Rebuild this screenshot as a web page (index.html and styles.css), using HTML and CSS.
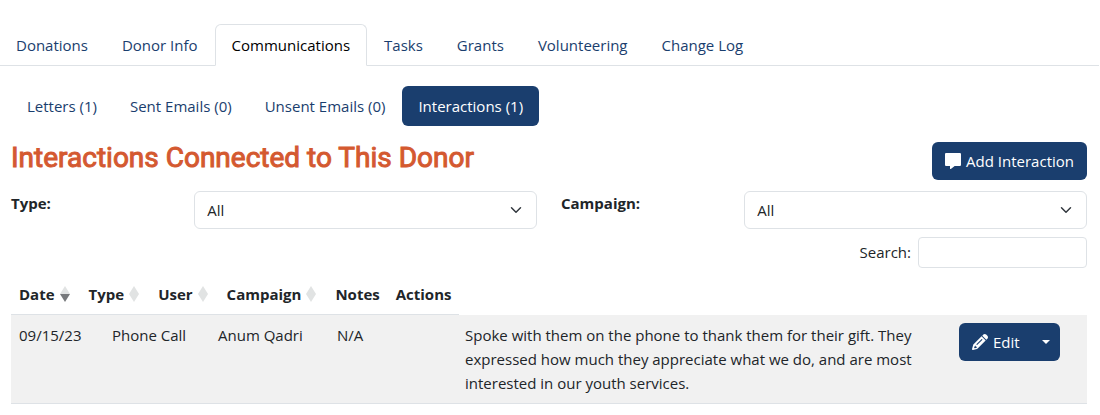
FILE: index.html
```
<!DOCTYPE html>
<html lang="en">
<head>
    <meta charset="UTF-8">
    <meta name="viewport" content="width=device-width, initial-scale=1.0">
    <title>Donor Communications</title>
    <link rel="stylesheet" href="styles.css">
</head>
<body>
    <nav class="tabs">
        <a class="tab" href="#">Donations</a>
        <a class="tab" href="#">Donor Info</a>
        <a class="tab active" href="#">Communications</a>
        <a class="tab" href="#">Tasks</a>
        <a class="tab" href="#">Grants</a>
        <a class="tab" href="#">Volunteering</a>
        <a class="tab" href="#">Change Log</a>
    </nav>
    <main class="content">
        <nav class="pills">
            <a class="pill" href="#">Letters (1)</a>
            <a class="pill" href="#">Sent Emails (0)</a>
            <a class="pill" href="#">Unsent Emails (0)</a>
            <a class="pill active" href="#">Interactions (1)</a>
        </nav>
        <div class="heading">
            <h3>Interactions Connected to This Donor</h3>
            <button class="btn" type="button">
                <svg class="icon" viewBox="0 0 512 512" aria-hidden="true"><path d="M40 0C18 0 0 18 0 40V376c0 22 18 40 40 40h120v80c0 6 3 12 9 14s12 2 17-1L309 416H472c22 0 40-18 40-40V40c0-22-18-40-40-40H40z"/></svg>
                Add Interaction
            </button>
        </div>
        <div class="filters">
            <label for="type">Type:</label>
            <div class="field">
                <select id="type">
                    <option>All</option>
                </select>
            </div>
            <label for="campaign">Campaign:</label>
            <div class="field">
                <select id="campaign">
                    <option>All</option>
                </select>
            </div>
        </div>
        <div class="search">
            <label for="search">Search:</label>
            <input id="search" type="search">
        </div>
        <table class="interactions">
            <thead>
                <tr>
                    <th class="sort desc">Date</th>
                    <th class="sort">Type</th>
                    <th class="sort">User</th>
                    <th class="sort">Campaign</th>
                    <th>Notes</th>
                    <th>Actions</th>
                </tr>
            </thead>
            <tbody>
                <tr>
                    <td class="date">09/15/23</td>
                    <td class="type">Phone Call</td>
                    <td class="user">Anum Qadri</td>
                    <td class="campaign">N/A</td>
                    <td class="notes">Spoke with them on the phone to thank them for their gift. They expressed how much they appreciate what we do, and are most interested in our youth services.</td>
                    <td class="actions">
                        <div class="btn-group">
                            <button class="btn" type="button">
                                <svg class="icon" viewBox="0 0 512 512" aria-hidden="true"><path fill-rule="evenodd" d="M363 19l-34 34 130 130 34-34c25-25 25-65 0-90L453 19c-25-25-65-25-90 0zM306 75L50 331c-7 7-12 15-15 25L1 481c-5 18 12 35 30 30l125-34c10-3 18-8 25-15L437 206zM327 188L171 344c-16 16-39-7-23-23l156-156c16-16 39 7 23 23zM84 400l12-24h24v34h34v22l-22 12-48 10-18-18z"/></svg>
                                Edit
                            </button>
                            <button class="btn toggle" type="button" aria-label="More actions"></button>
                        </div>
                    </td>
                </tr>
            </tbody>
        </table>
    </main>
</body>
</html>
```
FILE: styles.css
```
* {
    box-sizing: border-box;
}
body {
    margin: 0;
    padding-top: 24px;
    background: #fff;
    color: #212529;
    font-family: "Open Sans", "Noto Sans", sans-serif;
    font-size: 15px;
    line-height: 24px;
}
button, input, select {
    font: inherit;
    color: inherit;
}
a {
    color: #1a3e6e;
    text-decoration: none;
}
.tabs {
    display: flex;
    margin-right: 1px;
    border-bottom: 1px solid #dee2e6;
}
.tab {
    padding: 8px 16px;
    margin-bottom: -1px;
    border: 1px solid transparent;
    border-radius: 6px 6px 0 0;
}
.tab:first-child {
    padding-left: 15px;
}
.tab.active {
    color: #000;
    background: #fff;
    border-color: #dee2e6 #dee2e6 #fff;
}
.content {
    padding: 20px 13px 0 11px;
}
.pills {
    display: flex;
    gap: 1px;
}
.pill {
    padding: 8px 16px;
    border-radius: 6px;
}
.pill.active {
    color: #fff;
    background: #1a3e6e;
}
.heading {
    display: flex;
    justify-content: space-between;
    align-items: flex-start;
    margin-top: 16px;
}
h3 {
    margin: 0;
    color: #d45930;
    font-family: Roboto, sans-serif;
    font-size: 28px;
    font-weight: 400;
    line-height: 32px;
    -webkit-text-stroke: 1px #d45930;
}
.btn {
    display: flex;
    align-items: center;
    gap: 5px;
    padding: 7px 13px;
    border: 0;
    border-radius: 6px;
    color: #fff;
    background: #1a3e6e;
    cursor: pointer;
}
.icon {
    width: 16px;
    height: 16px;
    fill: currentColor;
}
.filters {
    display: grid;
    grid-template-columns: 2fr 4fr 2fr 4fr;
    margin: 11px -12px 0;
}
.filters label, .field {
    padding: 0 12px;
}
.filters label {
    font-weight: 700;
}
select {
    width: 100%;
    height: 38px;
    padding: 0 36px 0 12px;
    border: 1px solid #dee2e6;
    border-radius: 6px;
    appearance: none;
    background: #fff url("data:image/svg+xml,%3Csvg xmlns='http://www.w3.org/2000/svg' viewBox='0 0 16 16'%3E%3Cpath fill='none' stroke='%23343a40' stroke-linecap='round' stroke-linejoin='round' stroke-width='2' d='m2 5 6 6 6-6'/%3E%3C/svg%3E") no-repeat right 12px center / 16px 12px;
}
.search {
    display: flex;
    justify-content: flex-end;
    gap: 7px;
    margin-top: 8px;
    line-height: 30px;
}
.search input {
    width: 169px;
    height: 31px;
    padding: 4px 8px;
    border: 1px solid #dee2e6;
    border-radius: 4px;
}
/* head and body are sized separately, the head only takes the width of its labels */
.interactions {
    display: block;
    margin-top: 6px;
}
.interactions thead {
    display: table;
    border-collapse: collapse;
}
.interactions tbody {
    display: table;
    table-layout: fixed;
    width: 100%;
    border-collapse: collapse;
}
th, td {
    padding: 8px;
    text-align: left;
    vertical-align: top;
    border-bottom: 1px solid #dee2e6;
}
.sort {
    position: relative;
    padding-right: 26px;
}
.sort::before, .sort::after {
    content: "";
    position: absolute;
    right: 11px;
    border: 5px solid transparent;
}
.sort::before {
    top: 7px;
    border-bottom: 8px solid #e1e3e3;
}
.sort::after {
    top: 20px;
    border-top: 8px solid #e1e3e3;
}
.sort.desc::after {
    border-top-color: #77797c;
}
td {
    background: #f1f1f1;
}
.date {
    width: 93px;
}
.type {
    width: 106px;
}
.user {
    width: 119px;
}
.campaign {
    width: 128px;
}
.actions {
    width: 136px;
}
.btn-group {
    display: flex;
}
.btn-group .btn:first-child {
    border-radius: 6px 0 0 6px;
}
.btn-group .toggle {
    padding: 7px 10px 7px 9px;
    border-radius: 0 6px 6px 0;
}
.toggle::after {
    content: "";
    border: 4px solid transparent;
    border-top-color: #fff;
    border-bottom: 0;
}
```
